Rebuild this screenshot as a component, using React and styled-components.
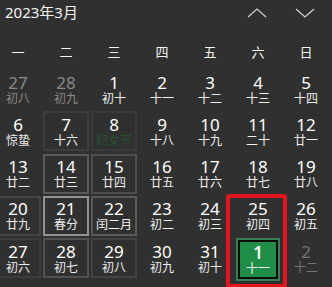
import React from "react";
import styled, { createGlobalStyle } from "styled-components";

const Global = createGlobalStyle`
  html, body { margin: 0; padding: 0; background: #303030; }
  body { font-family: "Noto Sans", "Noto Sans CJK SC", sans-serif; }
`;

const Root = styled.div`
  position: relative;
  width: 332px;
  height: 287px;
  overflow: hidden;
  background: #303030;
  color: #fff;
  font-family: "Noto Sans", "Noto Sans CJK SC", sans-serif;
`;

const Header = styled.div`
  height: 25px;
  display: flex;
  align-items: center;
  padding-left: 5px;
  padding-right: 3px;
`;

const Title = styled.div`
  font-size: 15px;
  color: #f2f2f2;
  flex: 1;
  line-height: 25px;
`;

const NavButton = styled.div`
  width: 48px;
  height: 25px;
  display: flex;
  align-items: center;
  justify-content: center;
  color: #cfcfcf;
`;

const Weekdays = styled.div`
  margin-top: 13px;
  margin-left: -5px;
  height: 26px;
  display: grid;
  grid-template-columns: repeat(7, 46px);
  column-gap: 2px;
  align-items: center;
`;

const Weekday = styled.div`
  text-align: center;
  font-size: 13px;
  color: #f4f4f4;
`;

const Grid = styled.div`
  margin-top: 5px;
  margin-left: -5px;
  display: grid;
  grid-template-columns: repeat(7, 46px);
  grid-auto-rows: 40px;
  column-gap: 2px;
  row-gap: 2.25px;
`;

const Cell = styled.div`
  box-sizing: border-box;
  display: flex;
  flex-direction: column;
  align-items: center;
  justify-content: center;
  border: 2px solid ${(p) => (p.$reveal ? `rgba(255,255,255,${p.$reveal})` : "transparent")};
  color: ${(p) => (p.$muted === 2 ? "#747474" : p.$muted ? "#8a8a8a" : "#ffffff")};
  ${(p) =>
    p.$today &&
    `
    background: #1f8c47;
    border-color: #357f52;
    box-shadow: inset 0 0 0 2px #0b0b0b;
    margin: 0 1px;
    height: 43px;
  `}
`;

const Num = styled.div`
  font-size: 17px;
  line-height: 17px;
  font-weight: ${(p) => (p.$today ? 600 : 400)};
`;

const Lunar = styled.div`
  font-size: 12px;
  line-height: 13px;
  margin-top: 1px;
  color: ${(p) => (p.$festival ? "#25562f" : "inherit")};
  opacity: ${(p) => (p.$muted ? 1 : 0.92)};
`;

const Annotation = styled.div`
  position: absolute;
  left: 226px;
  top: 194px;
  width: 61px;
  height: 94px;
  box-sizing: border-box;
  border: 4px solid #e3151f;
  border-radius: 3px;
  pointer-events: none;
`;

const Chevron = ({ up }) => (
  <svg width="20" height="10" viewBox="0 0 20 10" fill="none">
    <path
      d={up ? "M1 9 L10 1 L19 9" : "M1 1 L10 9 L19 1"}
      stroke="currentColor"
      strokeWidth="1.3"
    />
  </svg>
);

const weekdays = ["一", "二", "三", "四", "五", "六", "日"];

const days = [
  ["27", "初八", 1], ["28", "初九", 1], ["1", "初十"], ["2", "十一"], ["3", "十二"], ["4", "十三"], ["5", "十四"],
  ["6", "惊蛰"], ["7", "十六"], ["8", "妇女节", 0, "f"], ["9", "十八"], ["10", "十九"], ["11", "二十"], ["12", "廿一"],
  ["13", "廿二"], ["14", "廿三"], ["15", "廿四"], ["16", "廿五"], ["17", "廿六"], ["18", "廿七"], ["19", "廿八"],
  ["20", "廿九"], ["21", "春分"], ["22", "闰二月"], ["23", "初二"], ["24", "初三"], ["25", "初四"], ["26", "初五"],
  ["27", "初六"], ["28", "初七"], ["29", "初八"], ["30", "初九"], ["31", "初十"], ["1", "十一", 0, "t"], ["2", "十二", 2],
];

// reveal-light intensity around the pointer (indexed by cell position)
const reveal = {
  8: 0.07, 9: 0.05, 15: 0.2, 16: 0.15, 21: 0.1, 22: 0.48, 23: 0.2, 28: 0.06, 29: 0.16, 30: 0.09,
};

export default function App() {
  return (
    <Root>
      <Global />
      <Header>
        <Title>2023年3月</Title>
        <NavButton><Chevron up /></NavButton>
        <NavButton><Chevron /></NavButton>
      </Header>
      <Weekdays>
        {weekdays.map((w) => (
          <Weekday key={w}>{w}</Weekday>
        ))}
      </Weekdays>
      <Grid>
        {days.map(([n, l, muted, flag], i) => (
          <Cell key={i} $muted={muted} $today={flag === "t"} $reveal={reveal[i]}>
            <Num $today={flag === "t"}>{n}</Num>
            <Lunar $festival={flag === "f"} $muted={muted}>{l}</Lunar>
          </Cell>
        ))}
      </Grid>
      <Annotation />
    </Root>
  );
}
